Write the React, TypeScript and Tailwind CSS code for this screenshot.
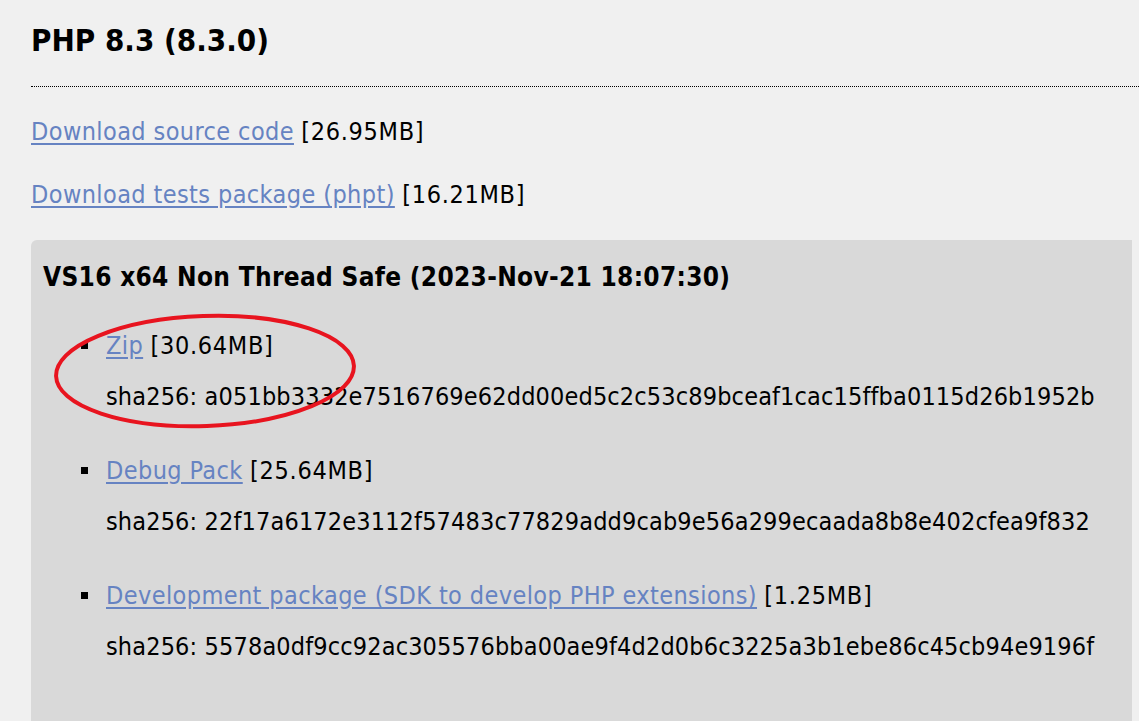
const items = [
  {
    label: 'Zip',
    size: '30.64MB',
    sha: 'a051bb3332e7516769e62dd00ed5c2c53c89bceaf1cac15ffba0115d26b1952b',
  },
  {
    label: 'Debug Pack',
    size: '25.64MB',
    sha: '22f17a6172e3112f57483c77829add9cab9e56a299ecaada8b8e402cfea9f832',
  },
  {
    label: 'Development package (SDK to develop PHP extensions)',
    size: '1.25MB',
    sha: '5578a0df9cc92ac305576bba00ae9f4d2d0b6c3225a3b1ebe86c45cb94e9196f',
  },
]

const font = "font-['DejaVu_Sans_Condensed','DejaVu_Sans',sans-serif]"
const link = 'text-[#6683c2] underline underline-offset-[3px] tracking-[0.4px]'
const size = 'tracking-[0.7px]'

export default function App() {
  return (
    <div className={`min-h-screen w-full overflow-hidden bg-[#f0f0f0] text-black ${font}`}>
      <div className="pl-[31px]">
        <h2 className="mt-[20px] text-[31px] font-bold leading-[40px]">PHP 8.3 (8.3.0)</h2>
        <div className="mt-[26px] border-b border-dotted border-black" />

        <p className="mt-[30px] text-[25px] leading-[30px] tracking-[0.15px]">
          <a href="#" className={link}>
            Download source code
          </a>{' '}
          <span className={size}>[26.95MB]</span>
        </p>
        <p className="mt-[33px] text-[25px] leading-[30px] tracking-[0.15px]">
          <a href="#" className={link}>
            Download tests package (phpt)
          </a>{' '}
          <span className={size}>[16.21MB]</span>
        </p>

        <div className="relative mt-[30px] mr-[7px] rounded-tl-[6px] bg-[#d9d9d9] pt-[22px] pb-[80px] pl-[12px]">
          <h3 className="text-[26px] font-bold leading-[30px] tracking-[0.3px]">
            VS16 x64 Non Thread Safe (2023-Nov-21 18:07:30)
          </h3>

          <ul className="mt-[39px] flex flex-col gap-[44px] pl-[63px]">
            {items.map((item) => (
              <li key={item.label} className="relative text-[25px] leading-[30px] tracking-[0.15px]">
                <span className="absolute left-[-25px] top-[11px] h-[7px] w-[7px] bg-black" />
                <div>
                  <a href="#" className={link}>
                    {item.label}
                  </a>{' '}
                  <span className={size}>[{item.size}]</span>
                </div>
                <div className="mt-[21px]">sha256: {item.sha}</div>
              </li>
            ))}
          </ul>

          {/* red hand-drawn ring round the Zip entry */}
          <svg
            className="pointer-events-none absolute left-[20px] top-[72px]"
            width="310"
            height="120"
            viewBox="0 0 310 120"
          >
            <ellipse
              cx="154"
              cy="59"
              rx="149"
              ry="55"
              fill="none"
              stroke="#e8141f"
              strokeWidth="4"
              transform="rotate(-2 154 59)"
            />
          </svg>
        </div>
      </div>
    </div>
  )
}
